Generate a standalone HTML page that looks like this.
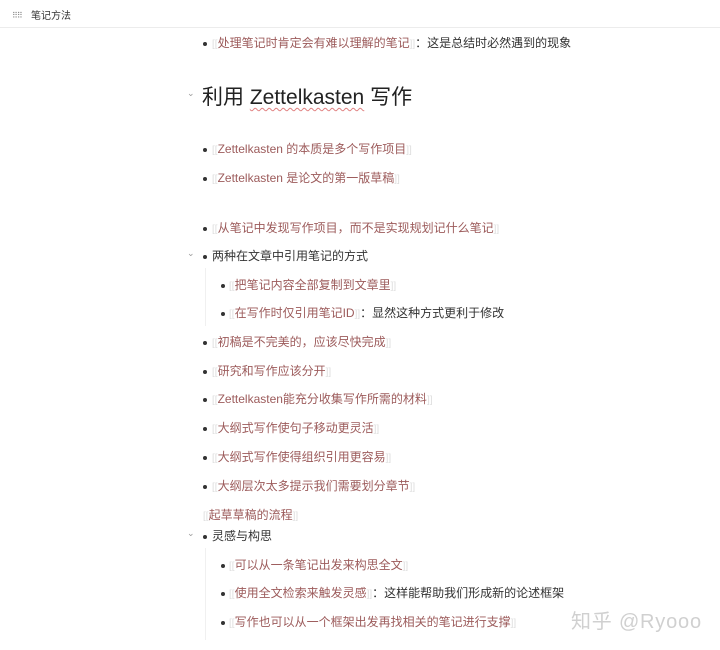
<!DOCTYPE html>
<html><head><meta charset="utf-8"><style>
body{margin:0;width:720px;height:650px;background:#fff;font-family:"Liberation Sans","Noto Sans CJK SC",sans-serif;overflow:hidden;position:relative}
.top{position:absolute;left:0;top:0;width:720px;height:27px;border-bottom:1px solid #ececec;font-size:10px;color:#333}
.top .t{position:absolute;left:31px;top:7px}
.top .d{position:absolute;left:12px;top:11px;font-size:8px;color:#888;letter-spacing:-1px}
.r{position:absolute;font-size:12px;line-height:18px;color:#333;white-space:nowrap}
.b{position:absolute;width:4px;height:4px;border-radius:50%;background:#333}
.l{color:#9c5b5b}
.k{color:#ddd;font-size:10px}
.ar{position:absolute;font-size:9px;color:#999}
.v{position:absolute;width:1px;background:#f0f0f0}
h1{position:absolute;left:202px;top:84px;margin:0;font-weight:normal;font-size:21px;color:#222;line-height:28px}
h1 u{text-decoration:underline wavy #e08080 1px;text-underline-offset:3px}
.wm{position:absolute;left:571px;top:605px;font-size:20px;color:#d0d0d0;letter-spacing:0.8px}
</style></head><body>
<div class="top"><span class="d">⠿⠿</span><span class="t">笔记方法</span></div>

<div class="b" style="left:203px;top:42px"></div><div class="r" style="left:212px;top:34px"><span class="k">[[</span><span class="l">处理笔记时肯定会有难以理解的笔记</span><span class="k">]]</span>：这是总结时必然遇到的现象</div>

<div class="ar" style="left:187px;top:88px">⌄</div>
<h1>利用 <u>Zettelkasten</u> 写作</h1>

<div class="b" style="left:203px;top:148px"></div><div class="r" style="left:212px;top:140px"><span class="k">[[</span><span class="l">Zettelkasten 的本质是多个写作项目</span><span class="k">]]</span></div>
<div class="b" style="left:203px;top:177px"></div><div class="r" style="left:212px;top:169px"><span class="k">[[</span><span class="l">Zettelkasten 是论文的第一版草稿</span><span class="k">]]</span></div>
<div class="b" style="left:203px;top:227px"></div><div class="r" style="left:212px;top:219px"><span class="k">[[</span><span class="l">从笔记中发现写作项目，而不是实现规划记什么笔记</span><span class="k">]]</span></div>

<div class="ar" style="left:187px;top:248px">⌄</div>
<div class="b" style="left:203px;top:255px"></div><div class="r" style="left:212px;top:247px">两种在文章中引用笔记的方式</div>
<div class="v" style="left:205px;top:268px;height:58px"></div>
<div class="b" style="left:221px;top:284px"></div><div class="r" style="left:229px;top:276px"><span class="k">[[</span><span class="l">把笔记内容全部复制到文章里</span><span class="k">]]</span></div>
<div class="b" style="left:221px;top:312px"></div><div class="r" style="left:229px;top:304px"><span class="k">[[</span><span class="l">在写作时仅引用笔记ID</span><span class="k">]]</span>：显然这种方式更利于修改</div>

<div class="b" style="left:203px;top:341px"></div><div class="r" style="left:212px;top:333px"><span class="k">[[</span><span class="l">初稿是不完美的，应该尽快完成</span><span class="k">]]</span></div>
<div class="b" style="left:203px;top:370px"></div><div class="r" style="left:212px;top:362px"><span class="k">[[</span><span class="l">研究和写作应该分开</span><span class="k">]]</span></div>
<div class="b" style="left:203px;top:398px"></div><div class="r" style="left:212px;top:390px"><span class="k">[[</span><span class="l">Zettelkasten能充分收集写作所需的材料</span><span class="k">]]</span></div>
<div class="b" style="left:203px;top:427px"></div><div class="r" style="left:212px;top:419px"><span class="k">[[</span><span class="l">大纲式写作使句子移动更灵活</span><span class="k">]]</span></div>
<div class="b" style="left:203px;top:456px"></div><div class="r" style="left:212px;top:448px"><span class="k">[[</span><span class="l">大纲式写作使得组织引用更容易</span><span class="k">]]</span></div>
<div class="b" style="left:203px;top:485px"></div><div class="r" style="left:212px;top:477px"><span class="k">[[</span><span class="l">大纲层次太多提示我们需要划分章节</span><span class="k">]]</span></div>

<div class="r" style="left:203px;top:506px"><span class="k">[[</span><span class="l">起草草稿的流程</span><span class="k">]]</span></div>

<div class="ar" style="left:187px;top:528px">⌄</div>
<div class="b" style="left:203px;top:535px"></div><div class="r" style="left:212px;top:527px">灵感与构思</div>
<div class="v" style="left:205px;top:548px;height:92px"></div>
<div class="b" style="left:221px;top:564px"></div><div class="r" style="left:229px;top:556px"><span class="k">[[</span><span class="l">可以从一条笔记出发来构思全文</span><span class="k">]]</span></div>
<div class="b" style="left:221px;top:592px"></div><div class="r" style="left:229px;top:584px"><span class="k">[[</span><span class="l">使用全文检索来触发灵感</span><span class="k">]]</span>：这样能帮助我们形成新的论述框架</div>
<div class="b" style="left:221px;top:621px"></div><div class="r" style="left:229px;top:613px"><span class="k">[[</span><span class="l">写作也可以从一个框架出发再找相关的笔记进行支撑</span><span class="k">]]</span></div>

<div class="wm">知乎 @Ryooo</div>
</body></html>
